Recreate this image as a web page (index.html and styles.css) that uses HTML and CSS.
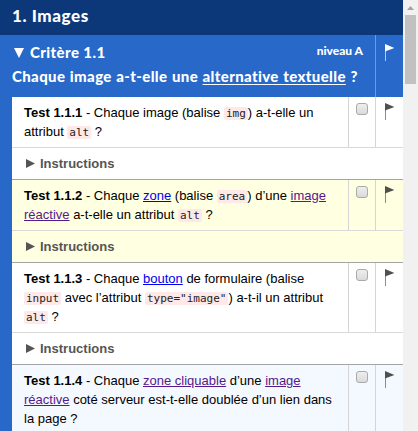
FILE: index.html
```html
<!DOCTYPE html>
<html lang="fr">
<head>
<meta charset="utf-8">
<title>Images</title>
<link rel="stylesheet" href="styles.css">
</head>
<body>
<svg class="defs"><symbol id="flag" viewBox="0 0 10 18"><path d="M0 0L9.4 4L0 7.6Z" fill="currentColor"/><path d="M.5 7V17" stroke="currentColor" stroke-opacity=".65" fill="none"/></symbol></svg>
<div class="window">
<main class="page">
  <h1><span>1. Images</span></h1>
  <section class="criterion">
    <header class="criterion-head">
      <div class="criterion-title">
        <div class="title-line"><svg class="down" viewBox="0 0 10 10"><path d="M0 0H10L5 10Z" fill="currentColor"/></svg><h2><span>Critère 1.1</span></h2><span class="level">niveau A</span></div>
        <p class="question"><span>Chaque image a-t-elle une <u>alternative textuelle</u> ?</span></p>
      </div>
      <div class="flag-cell"><svg class="flag"><use href="#flag"/></svg></div>
    </header>
    <div class="tests">
      <article class="test">
        <div class="row"><p class="text"><b>Test 1.1.1</b> - Chaque image (balise <code>img</code>) a-t-elle un<br>attribut <code>alt</code> ?</p><div class="check-cell"><span class="check"></span></div><div class="flag-cell"><svg class="flag"><use href="#flag"/></svg></div></div>
        <div class="instructions"><svg class="right" viewBox="0 0 9 9"><path d="M0 0L9 4.5L0 9Z" fill="currentColor"/></svg>Instructions</div>
      </article>
      <article class="test yellow">
        <div class="row"><p class="text"><b>Test 1.1.2</b> - Chaque <a class="new">zone</a> (balise <code>area</code>) d’une <a>image</a><br><a>réactive</a> a-t-elle un attribut <code>alt</code> ?</p><div class="check-cell"><span class="check"></span></div><div class="flag-cell"><svg class="flag"><use href="#flag"/></svg></div></div>
        <div class="instructions"><svg class="right" viewBox="0 0 9 9"><path d="M0 0L9 4.5L0 9Z" fill="currentColor"/></svg>Instructions</div>
      </article>
      <article class="test">
        <div class="row"><p class="text"><b>Test 1.1.3</b> - Chaque <a class="new">bouton</a> de formulaire (balise<br><code>input</code> avec l’attribut <code>type="image"</code>) a-t-il un attribut<br><code>alt</code> ?</p><div class="check-cell"><span class="check"></span></div><div class="flag-cell"><svg class="flag"><use href="#flag"/></svg></div></div>
        <div class="instructions"><svg class="right" viewBox="0 0 9 9"><path d="M0 0L9 4.5L0 9Z" fill="currentColor"/></svg>Instructions</div>
      </article>
      <article class="test pale">
        <div class="row"><p class="text"><b>Test 1.1.4</b> - Chaque <a>zone cliquable</a> d’une <a>image</a><br><a>réactive</a> coté serveur est-t-elle doublée d’un lien dans<br>la page ?</p><div class="check-cell"><span class="check"></span></div><div class="flag-cell"><svg class="flag"><use href="#flag"/></svg></div></div>
      </article>
    </div>
  </section>
</main>
<aside class="scrollbar"><svg class="arrow" viewBox="0 0 7 4"><path d="M0 4L3.5 0L7 4Z" fill="#a3a3a3"/></svg><div class="thumb"></div></aside>
</div>
</body>
</html>
```
FILE: styles.css
```css
* { box-sizing: border-box; }
body { margin: 0; overflow: hidden; font: 13px/19px "Liberation Sans", Arial, sans-serif; color: #000; }
h1, h2, p { margin: 0; }
.defs { display: none; }
.window { display: flex; height: 431px; }
.page { width: 403px; overflow: hidden; background: #2768c9; }
h1, .criterion-head { font-family: Lato, sans-serif; font-weight: 900; color: #fff; }
h1 { height: 35px; padding: 4px 12px 0; background: #0c387a; font-size: 17px; line-height: 23px; letter-spacing: .6px; }
.criterion-head { display: flex; height: 62px; }
.criterion-title { flex: 1; padding: 7px 0 0 12px; }
.title-line { display: flex; height: 21px; padding-right: 12px; }
.down { width: 10px; height: 10px; margin: 6px 6px 0 2px; }
h2 { font-size: 15px; line-height: 21px; font-weight: 900; letter-spacing: .4px; }
.level { margin-left: auto; font-size: 12px; line-height: 18px; }
.question { font-size: 15px; line-height: 20px; margin-top: 3px; white-space: nowrap; letter-spacing: .36px; word-spacing: .6px; }
.question u { text-decoration-thickness: 1px; text-underline-offset: 2px; }
.flag-cell { width: 28px; flex: none; border-left: 1px solid #d5d5d5; padding: 6px 0 0 9px; color: #505050; }
.criterion-head .flag-cell { border-color: #6f9bdd; color: #fff; padding-top: 9px; }
.flag { display: block; width: 10px; height: 18px; }
.tests { margin-left: 12px; }
.test { background: #fff; border-bottom: 1px solid #a5a5a5; }
.yellow { background: #ffffe2; }
.pale { background: #f4f8ff; }
.row { display: flex; border-bottom: 1px solid #d9d9d9; }
.text { flex: 1; padding: 6px 0 6px 12px; white-space: nowrap; }
.check-cell { width: 27px; flex: none; border-left: 1px solid #d5d5d5; padding: 6px 0 0 7px; }
.check { display: block; width: 12px; height: 12px; border: 1px solid #aaa; border-radius: 3px; background: linear-gradient(#eee, #dadada); }
code { font: 11px/13px "DejaVu Sans Mono", monospace; color: #222; background: #ffe8e8; border-radius: 2px; padding: 0 2px; }
a { color: #551a8b; text-decoration: underline; }
a.new { color: #0000ee; }
.instructions { display: flex; height: 31px; padding: 6px 14px; font-weight: bold; color: #555; }
.right { width: 9px; height: 9px; margin: 5px 5px 0 0; }
.scrollbar { width: 15px; background: #f1f1f1; padding: 6px 2px 0; }
.arrow { display: block; width: 7px; height: 4px; margin: 0 auto 5px 2px; }
.thumb { width: 11px; height: 69px; background: #c1c1c1; }
```
